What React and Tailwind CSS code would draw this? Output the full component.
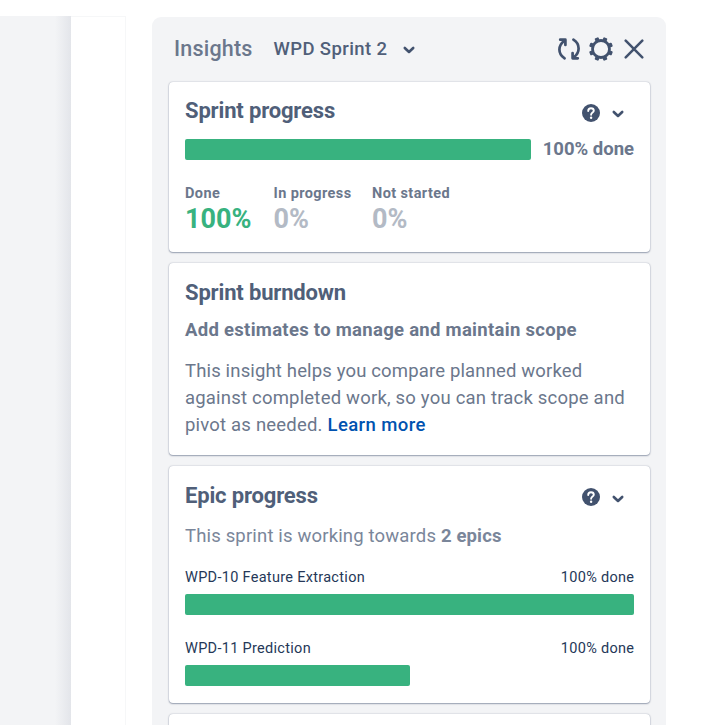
const ICON = "#42526E";

function Chevron({ className }) {
  return (
    <svg className={className} width="14" height="10" viewBox="0 0 14 10" fill="none" stroke={ICON} strokeWidth="2.6" strokeLinecap="round" strokeLinejoin="round">
      <path d="M2.8 3 7 7l4.200-4" />
    </svg>
  );
}

function Help() {
  return (
    <svg width="18" height="18" viewBox="0 0 18 18" fill="none">
      <circle cx="9" cy="9" r="9" fill={ICON} />
      <path d="M6.2 7C6.200 5.200 7.400 4.300 9 4.300s2.800 1 2.800 2.500c0 1.800-2.700 1.800-2.700 3.900" stroke="#fff" strokeWidth="1.9" strokeLinecap="round" />
      <circle cx="9.1" cy="13.7" r="1.2" fill="#fff" />
    </svg>
  );
}

function Refresh() {
  return (
    <svg width="24" height="24" viewBox="0 0 24 24" fill="none" stroke={ICON} strokeWidth="2.700" strokeLinecap="round" strokeLinejoin="round">
      <path d="M7.600 21.400C4.400 19.400 2.400 16.200 2.400 12.600 2.400 9.200 4.400 6 7 4" />
      <path d="M3.200 2.700H8.400V8" />
      <path d="M16.400 2.600C19.600 4.600 21.600 7.800 21.600 11.400c0 3.400-2 6.600-4.600 8.600" />
      <path d="M20.800 21.300H15.600V16" />
    </svg>
  );
}

function Gear() {
  const teeth = [22.5, 67.5, 112.5, 157.5, 202.5, 247.5, 292.5, 337.5];
  return (
    <svg width="24" height="24" viewBox="0 0 24 24" fill="none">
      <circle cx="12" cy="12" r="8.500" stroke={ICON} strokeWidth="2.800" />
      {teeth.map((a) => (
        <rect key={a} x="9.900" y="-0.100" width="4.200" height="4" rx="1" fill={ICON} transform={`rotate(${a} 12 12)`} />
      ))}
    </svg>
  );
}

function Close() {
  return (
    <svg width="20" height="20" viewBox="0 0 20 20" fill="none" stroke={ICON} strokeWidth="2.500" strokeLinecap="round">
      <path d="M1.700 1.700 18.300 18.300M18.300 1.700 1.700 18.300" />
    </svg>
  );
}

function Card({ className, children }) {
  return (
    <section className={`rounded-[4px] bg-white px-4 shadow-[0_1px_1.5px_rgba(9,30,66,0.34),0_0_1.5px_rgba(9,30,66,0.34)] ${className}`}>
      {children}
    </section>
  );
}

function CardTitle({ children, actions }) {
  return (
    <div className="flex h-7 items-center justify-between">
      <h2 className="text-[22px] leading-7 font-bold tracking-[-0.16px] text-[#505F79]">{children}</h2>
      {actions && (
        <div className="flex items-center gap-[11px] pt-[3px] pr-[9px]">
          <Help />
          <Chevron className="mt-[3px]" />
        </div>
      )}
    </div>
  );
}

function Stat({ label, value, className, valueClass }) {
  return (
    <div className={className}>
      <div className="text-[14.5px] leading-5 font-bold tracking-[0.4px] whitespace-nowrap text-[#6B778C]">{label}</div>
      <div className={`text-[27px] leading-[30px] font-bold ${valueClass}`}>{value}</div>
    </div>
  );
}

function Epic({ name, bar, className }) {
  return (
    <div className={className}>
      <div className="flex h-5 items-center justify-between text-[14.5px] leading-5 tracking-[0.3px] text-[#253858]">
        <span>{name}</span>
        <span className="-mr-[0.3px]">100% done</span>
      </div>
      <div className={`mt-[6px] h-[21.5px] rounded-[2px] bg-[#38B27F] ${bar}`} />
    </div>
  );
}

export default function App() {
  return (
    <div className="flex h-[725px] w-[720px] overflow-hidden bg-white pt-4 font-[Roboto,sans-serif]">
      <div className="flex w-[71px] shrink-0 justify-end bg-[#F3F4F6]">
        <div className="w-4 bg-linear-to-r from-[#F3F4F6] to-[#E3E5EA]" />
      </div>
      <div className="w-[55px] shrink-0 border-t border-r border-[#F6F7F8]" />
      <aside className="mt-px ml-[26px] w-[514px] shrink-0 rounded-t-[9px] bg-[#F3F4F6] pr-4 pl-[17px]">
        <header className="mb-px flex h-16 items-center pl-[5px]">
          <h1 className="w-[99.500px] pt-px text-[21.5px] font-medium tracking-[0.2px] text-[#6B778C]">Insights</h1>
          <span className="w-[128.500px] pt-[2px] text-[18.500px] font-medium tracking-[0.4px] text-[#505F79]">WPD Sprint 2</span>
          <Chevron className="mt-px" />
          <div className="ml-auto flex items-center gap-2 pr-[6px]">
            <Refresh />
            <Gear />
            <div className="ml-[3px]"><Close /></div>
          </div>
        </header>

        <Card className="h-[169.500px] pt-[15px]">
          <CardTitle actions>Sprint progress</CardTitle>
          <div className="mt-[13.500px] flex h-[21.5px] items-center">
            <div className="h-full w-[346px] rounded-[2px] bg-[#38B27F]" />
            <span className="ml-3 pt-px text-[18.500px] font-bold whitespace-nowrap text-[#6B778C]">100% done</span>
          </div>
          <div className="mt-[24px] flex">
            <Stat className="w-[88.500px]" label="Done" value="100%" valueClass="text-[#38B27F]" />
            <Stat className="w-[98.500px]" label="In progress" value="0%" valueClass="text-[#B3BAC5]" />
            <Stat label="Not started" value="0%" valueClass="text-[#B3BAC5]" />
          </div>
        </Card>

        <Card className="mt-[11.500px] h-[192px] pt-4">
          <CardTitle>Sprint burndown</CardTitle>
          <p className="mt-[11px] text-[18.500px] leading-6 font-bold tracking-[0.29px] whitespace-nowrap text-[#6B778C]">Add estimates to manage and maintain scope</p>
          <p className="mt-[15.500px] text-[18.500px] leading-[27px] tracking-[0.2px] whitespace-nowrap text-[#6B778C]">
            <span className="tracking-[0.15px]">This insight helps you compare planned worked</span><br />
            against completed work, so you can track scope and<br />
            pivot as needed. <a className="font-medium tracking-[0.42px] text-[#0052B0]">Learn more</a>
          </p>
        </Card>

        <Card className="mt-[11px] h-[236.500px] pt-[15.500px]">
          <CardTitle actions>Epic progress</CardTitle>
          <p className="mt-[14px] text-[18.500px] leading-6 tracking-[0.16px] whitespace-nowrap text-[#7A869A]">
            This sprint is working towards <b className="font-bold">2 epics</b>
          </p>
          <Epic className="mt-[20px]" name="WPD-10 Feature Extraction" bar="w-full" />
          <Epic className="mt-[23.500px]" name="WPD-11 Prediction" bar="w-1/2" />
        </Card>

        <Card className="mt-[11.500px] h-[60px]" />
      </aside>
    </div>
  );
}
